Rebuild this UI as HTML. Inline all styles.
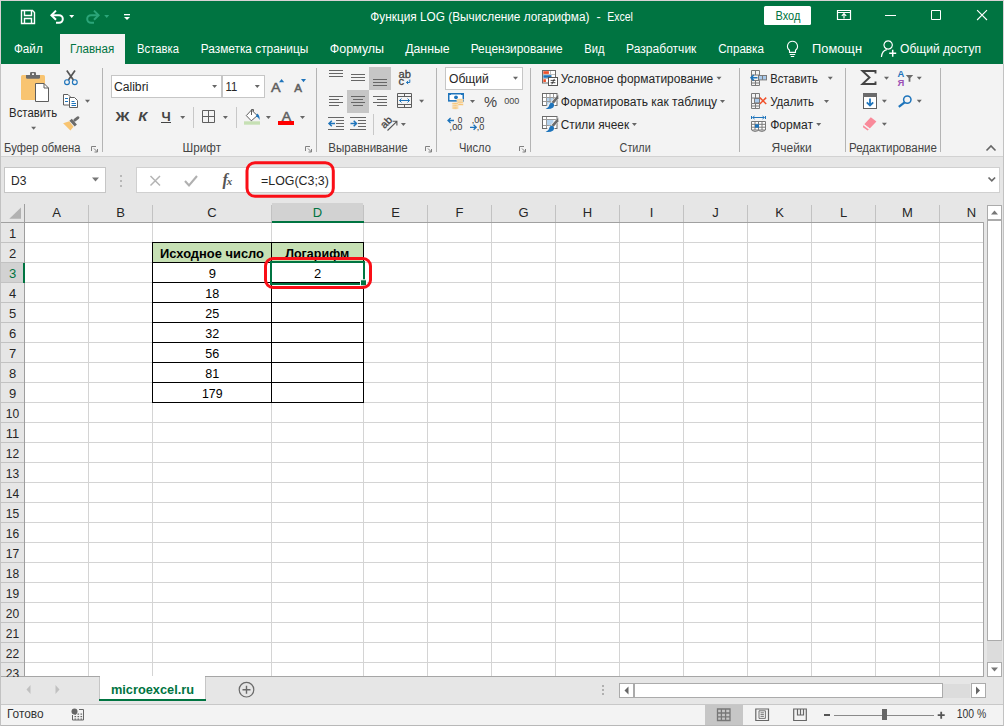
<!DOCTYPE html>
<html lang="ru"><head><meta charset="utf-8"><title>Функция LOG (Вычисление логарифма) - Excel</title>
<style>
html,body{margin:0;padding:0;background:#e6e6e6;}
body{width:1004px;height:726px;overflow:hidden;position:relative;font-family:"Liberation Sans",sans-serif;}
.r{position:absolute;}
#titlebar{left:0;top:0;width:1004px;height:64px;background:#007441;}
#ribbon{left:0;top:64px;width:1004px;height:92px;background:#f3f3f3;border-bottom:1px solid #d2d2d2;}
#fbar{left:0;top:157px;width:1004px;height:46px;background:#e6e6e6;}
#grid{left:0;top:203px;width:984px;height:474px;background:#fff;}
#tabsbar{left:0;top:677px;width:1004px;height:27px;background:#e6e6e6;}
#status{left:0;top:704px;width:1004px;height:22px;background:#f3f3f3;}
svg{position:absolute;left:0;top:0;}
svg text{font-family:"Liberation Sans",sans-serif;}
</style></head><body>
<div class="r" id="titlebar"></div>
<div class="r" id="ribbon"></div>
<div class="r" id="fbar"></div>
<div class="r" id="grid"></div>
<div class="r" id="tabsbar"></div>
<div class="r" id="status"></div>
<svg width="1004" height="726" viewBox="0 0 1004 726">
<text x="370.3" y="20.5" font-size="12.5" fill="#fff" font-weight="normal" font-style="normal" textLength="219.2" lengthAdjust="spacingAndGlyphs" >Функция LOG (Вычисление логарифма)</text>
<text x="596.4" y="20.5" font-size="12.5" fill="#fff" font-weight="normal" font-style="normal" textLength="4.2" lengthAdjust="spacingAndGlyphs" >-</text>
<text x="607.2" y="20.5" font-size="12.5" fill="#fff" font-weight="normal" font-style="normal" textLength="25.7" lengthAdjust="spacingAndGlyphs" >Excel</text>
<rect x="764" y="6" width="47" height="19" fill="#fff" rx="1.5"/>
<text x="775.5" y="20" font-size="13" fill="#007441" font-weight="normal" font-style="normal" textLength="24.9" lengthAdjust="spacingAndGlyphs" >Вход</text>
<path d="M21.5 10.5h11l2 2v11h-13z M24.5 10.5v5h7v-5 M24.5 23.5v-5h7v5" fill="none" stroke="#fff" stroke-width="1.4" />
<path d="M51.5 15.2h7.5a3.8 3.8 0 0 1 0 7.6h-3" fill="none" stroke="#fff" stroke-width="2" />
<path d="M56 10.6l-4.6 4.6l4.6 4.6" fill="none" stroke="#fff" stroke-width="2" />
<path d="M69.2 15.0h5l-2.5 3z" fill="#fff" stroke="none" stroke-width="1" />
<path d="M98.5 15.2h-7.5a3.8 3.8 0 0 0 0 7.6h3" fill="none" stroke="#2ba579" stroke-width="2" />
<path d="M94 10.6l4.6 4.6l-4.6 4.6" fill="none" stroke="#2ba579" stroke-width="2" />
<path d="M104.2 15.0h5l-2.5 3z" fill="#2ba579" stroke="none" stroke-width="1" />
<rect x="124" y="14" width="6" height="1.3" fill="#fff" />
<path d="M124.0 17.0h6l-3.0 3z" fill="#fff" stroke="none" stroke-width="1" />
<path d="M837.5 10.5h13v9h-13z M837.5 12.5h13" fill="none" stroke="#fff" stroke-width="1.2" />
<path d="M844 18.5v-4.5 M841.8 15.8l2.2-2.2l2.2 2.2" fill="none" stroke="#fff" stroke-width="1.2" />
<rect x="885" y="15" width="11" height="1" fill="#fff" />
<path d="M931.5 10.5h9v9h-9z" fill="none" stroke="#fff" stroke-width="1" />
<path d="M977.1 10.1l9.9 9.9 M987 10.1l-9.9 9.9" fill="none" stroke="#fff" stroke-width="1.1" />
<rect x="60" y="34" width="65" height="31" fill="#f3f3f3" />
<text x="14.0" y="53" font-size="12.5" fill="#fff" font-weight="normal" font-style="normal" textLength="28.7" lengthAdjust="spacingAndGlyphs" >Файл</text>
<text x="70.1" y="53" font-size="12.5" fill="#007441" font-weight="normal" font-style="normal" textLength="44.1" lengthAdjust="spacingAndGlyphs" >Главная</text>
<text x="137.1" y="53" font-size="12.5" fill="#fff" font-weight="normal" font-style="normal" textLength="41.8" lengthAdjust="spacingAndGlyphs" >Вставка</text>
<text x="200.8" y="53" font-size="12.5" fill="#fff" font-weight="normal" font-style="normal" textLength="107.4" lengthAdjust="spacingAndGlyphs" >Разметка страницы</text>
<text x="329.8" y="53" font-size="12.5" fill="#fff" font-weight="normal" font-style="normal" textLength="54.3" lengthAdjust="spacingAndGlyphs" >Формулы</text>
<text x="405.2" y="53" font-size="12.5" fill="#fff" font-weight="normal" font-style="normal" textLength="44.4" lengthAdjust="spacingAndGlyphs" >Данные</text>
<text x="470.7" y="53" font-size="12.5" fill="#fff" font-weight="normal" font-style="normal" textLength="92.0" lengthAdjust="spacingAndGlyphs" >Рецензирование</text>
<text x="584.3" y="53" font-size="12.5" fill="#fff" font-weight="normal" font-style="normal" textLength="20.2" lengthAdjust="spacingAndGlyphs" >Вид</text>
<text x="626.1" y="53" font-size="12.5" fill="#fff" font-weight="normal" font-style="normal" textLength="70.3" lengthAdjust="spacingAndGlyphs" >Разработчик</text>
<text x="718.2" y="53" font-size="12.5" fill="#fff" font-weight="normal" font-style="normal" textLength="45.7" lengthAdjust="spacingAndGlyphs" >Справка</text>
<text x="812.1" y="53" font-size="12.5" fill="#fff" font-weight="normal" font-style="normal" textLength="49.9" lengthAdjust="spacingAndGlyphs" >Помощн</text>
<text x="900.0" y="53" font-size="12.5" fill="#fff" font-weight="normal" font-style="normal" textLength="81.0" lengthAdjust="spacingAndGlyphs" >Общий доступ</text>
<path d="M792.5 41.2a5 5 0 0 1 3 9v2.2h-6v-2.2a5 5 0 0 1 3-9z M789.8 54.5h5.4 M790.8 56.5h3.4" fill="none" stroke="#fff" stroke-width="1.1" />
<path d="M888.2 40.8a4.2 4.2 0 1 1 -0.1 0z M881.4 57c0.4-4.6 2.6-6.8 5.4-7.4" fill="none" stroke="#fff" stroke-width="1.2" />
<path d="M892.7 49.8v7 M889.2 53.3h7" fill="none" stroke="#fff" stroke-width="1.5" />
<rect x="102" y="68" width="1" height="84" fill="#b4b4b4" />
<rect x="316" y="68" width="1" height="84" fill="#b4b4b4" />
<rect x="436" y="68" width="1" height="84" fill="#b4b4b4" />
<rect x="530" y="68" width="1" height="84" fill="#b4b4b4" />
<rect x="739" y="68" width="1" height="84" fill="#b4b4b4" />
<rect x="845" y="68" width="1" height="84" fill="#b4b4b4" />
<rect x="940" y="68" width="1" height="84" fill="#b4b4b4" />
<text x="4.1" y="152" font-size="12" fill="#444" font-weight="normal" font-style="normal" textLength="76.3" lengthAdjust="spacingAndGlyphs" >Буфер обмена</text>
<text x="182.6" y="152" font-size="12" fill="#444" font-weight="normal" font-style="normal" textLength="38.4" lengthAdjust="spacingAndGlyphs" >Шрифт</text>
<text x="328.3" y="152" font-size="12" fill="#444" font-weight="normal" font-style="normal" textLength="79.5" lengthAdjust="spacingAndGlyphs" >Выравнивание</text>
<text x="458.9" y="152" font-size="12" fill="#444" font-weight="normal" font-style="normal" textLength="32.0" lengthAdjust="spacingAndGlyphs" >Число</text>
<text x="619.6" y="152" font-size="12" fill="#444" font-weight="normal" font-style="normal" textLength="31.1" lengthAdjust="spacingAndGlyphs" >Стили</text>
<text x="771.6" y="152" font-size="12" fill="#444" font-weight="normal" font-style="normal" textLength="40.2" lengthAdjust="spacingAndGlyphs" >Ячейки</text>
<text x="849.0" y="152" font-size="12" fill="#444" font-weight="normal" font-style="normal" textLength="87.9" lengthAdjust="spacingAndGlyphs" >Редактирование</text>
<path d="M91.5 151v-4.5h4.5" fill="none" stroke="#808080" stroke-width="1" />
<path d="M94 148.5l3.5 3.5 M97.5 149v3h-3" fill="none" stroke="#808080" stroke-width="1" />
<path d="M305.5 151v-4.5h4.5" fill="none" stroke="#808080" stroke-width="1" />
<path d="M308 148.5l3.5 3.5 M311.5 149v3h-3" fill="none" stroke="#808080" stroke-width="1" />
<path d="M425.5 151v-4.5h4.5" fill="none" stroke="#808080" stroke-width="1" />
<path d="M428 148.5l3.5 3.5 M431.5 149v3h-3" fill="none" stroke="#808080" stroke-width="1" />
<path d="M519.5 151v-4.5h4.5" fill="none" stroke="#808080" stroke-width="1" />
<path d="M522 148.5l3.5 3.5 M525.5 149v3h-3" fill="none" stroke="#808080" stroke-width="1" />
<path d="M986.5 150.5l4.5-4.5l4.5 4.5" fill="none" stroke="#666" stroke-width="1.6" />
<text x="9.1" y="117.3" font-size="12" fill="#262626" font-weight="normal" font-style="normal" textLength="48.1" lengthAdjust="spacingAndGlyphs" >Вставить</text>
<path d="M31.1 126.80000000000001h5l-2.5 3z" fill="#666" stroke="none" stroke-width="1" />
<rect x="111.5" y="75.5" width="110" height="22" fill="#fff" stroke="#c6c6c6"/>
<rect x="222.5" y="75.5" width="42" height="22" fill="#fff" stroke="#c6c6c6"/>
<text x="113.9" y="90.5" font-size="12" fill="#262626" font-weight="normal" font-style="normal" textLength="34.5" lengthAdjust="spacingAndGlyphs" >Calibri</text>
<text x="225.6" y="90.5" font-size="12" fill="#262626" font-weight="normal" font-style="normal" textLength="11.7" lengthAdjust="spacingAndGlyphs" >11</text>
<path d="M212.1 85.0h5l-2.5 3z" fill="#666" stroke="none" stroke-width="1" />
<path d="M254.8 85.0h5l-2.5 3z" fill="#666" stroke="none" stroke-width="1" />
<text x="115.4" y="120.5" font-size="13" fill="#444" font-weight="bold" font-style="normal" textLength="14.0" lengthAdjust="spacingAndGlyphs" >Ж</text>
<text x="138.3" y="120.5" font-size="13" fill="#444" font-weight="bold" font-style="italic" textLength="9.1" lengthAdjust="spacingAndGlyphs" >К</text>
<text x="161.5" y="120.5" font-size="13" fill="#444" font-weight="bold" font-style="normal" textLength="9.2" lengthAdjust="spacingAndGlyphs" >Ч</text>
<rect x="161" y="122" width="10" height="1" fill="#444" />
<path d="M180.2 116.1h5l-2.5 3z" fill="#666" stroke="none" stroke-width="1" />
<path d="M222.9 116.1h5l-2.5 3z" fill="#666" stroke="none" stroke-width="1" />
<path d="M265.9 116.1h5l-2.5 3z" fill="#666" stroke="none" stroke-width="1" />
<path d="M300.0 116.1h5l-2.5 3z" fill="#666" stroke="none" stroke-width="1" />
<rect x="193" y="107" width="1" height="21" fill="#c8c8c8" />
<rect x="236" y="107" width="1" height="21" fill="#c8c8c8" />
<rect x="445.5" y="67.5" width="77" height="22" fill="#fff" stroke="#c6c6c6"/>
<text x="449.0" y="83" font-size="12" fill="#262626" font-weight="normal" font-style="normal" textLength="39.9" lengthAdjust="spacingAndGlyphs" >Общий</text>
<path d="M513.0 76.8h5l-2.5 3z" fill="#666" stroke="none" stroke-width="1" />
<text x="484.0" y="106.6" font-size="14.5" fill="#444" font-weight="normal" font-style="normal" textLength="13.1" lengthAdjust="spacingAndGlyphs" >%</text>
<text x="504.3" y="103.8" font-size="9.4" fill="#444" font-weight="normal" font-style="normal" textLength="15.1" lengthAdjust="spacingAndGlyphs" >000</text>
<path d="M470.0 99.9h5l-2.5 3z" fill="#666" stroke="none" stroke-width="1" />
<text x="560.8" y="83.2" font-size="12" fill="#262626" font-weight="normal" font-style="normal" textLength="152.5" lengthAdjust="spacingAndGlyphs" >Условное форматирование</text>
<text x="560.8" y="106" font-size="12" fill="#262626" font-weight="normal" font-style="normal" textLength="156.3" lengthAdjust="spacingAndGlyphs" >Форматировать как таблицу</text>
<text x="560.8" y="128.7" font-size="12" fill="#262626" font-weight="normal" font-style="normal" textLength="68.3" lengthAdjust="spacingAndGlyphs" >Стили ячеек</text>
<path d="M716.5 76.8h5l-2.5 3z" fill="#666" stroke="none" stroke-width="1" />
<path d="M720.0 99.9h5l-2.5 3z" fill="#666" stroke="none" stroke-width="1" />
<path d="M631.9 122.9h5l-2.5 3z" fill="#666" stroke="none" stroke-width="1" />
<text x="770.2" y="83.2" font-size="12" fill="#262626" font-weight="normal" font-style="normal" textLength="47.7" lengthAdjust="spacingAndGlyphs" >Вставить</text>
<text x="770.2" y="106" font-size="12" fill="#262626" font-weight="normal" font-style="normal" textLength="43.9" lengthAdjust="spacingAndGlyphs" >Удалить</text>
<text x="770.2" y="128.7" font-size="12" fill="#262626" font-weight="normal" font-style="normal" textLength="42.9" lengthAdjust="spacingAndGlyphs" >Формат</text>
<path d="M827.8 76.8h5l-2.5 3z" fill="#666" stroke="none" stroke-width="1" />
<path d="M824.0 99.9h5l-2.5 3z" fill="#666" stroke="none" stroke-width="1" />
<path d="M816.2 122.9h5l-2.5 3z" fill="#666" stroke="none" stroke-width="1" />
<path d="M884.0 76.7h5l-2.5 3z" fill="#666" stroke="none" stroke-width="1" />
<path d="M916.8 76.7h5l-2.5 3z" fill="#666" stroke="none" stroke-width="1" />
<path d="M881.9 99.8h5l-2.5 3z" fill="#666" stroke="none" stroke-width="1" />
<path d="M916.8 99.8h5l-2.5 3z" fill="#666" stroke="none" stroke-width="1" />
<path d="M881.9 122.8h5l-2.5 3z" fill="#666" stroke="none" stroke-width="1" />
<rect x="369" y="67" width="22" height="23" fill="#c6c6c6" />
<rect x="347" y="90" width="22" height="23" fill="#c6c6c6" />
<rect x="373" y="114" width="1" height="21" fill="#c8c8c8" />
<path d="M419.1 99.8h5l-2.5 3z" fill="#666" stroke="none" stroke-width="1" />
<path d="M400.9 122.9h5l-2.5 3z" fill="#666" stroke="none" stroke-width="1" />
<rect x="4.5" y="167.5" width="101" height="25" fill="#fff" stroke="#c6c6c6"/>
<text x="11.1" y="184.5" font-size="12" fill="#262626" font-weight="normal" font-style="normal" textLength="15.4" lengthAdjust="spacingAndGlyphs" >D3</text>
<path d="M92.0 177.5h7l-3.5 4z" fill="#777" stroke="none" stroke-width="1" />
<rect x="120" y="175" width="2" height="2" fill="#b8b8b8" />
<rect x="120" y="180" width="2" height="2" fill="#b8b8b8" />
<rect x="120" y="185" width="2" height="2" fill="#b8b8b8" />
<rect x="136.5" y="167.5" width="863" height="25" fill="#fff" stroke="#d0d0d0"/>
<path d="M150.5 176l9.5 9.5 M160 176l-9.5 9.5" fill="none" stroke="#b4b4b4" stroke-width="1.5" />
<path d="M185 181l4 4.5l8-9.5" fill="none" stroke="#b0b0b0" stroke-width="2.1" />
<text x="222.5" y="184.5" style="font-family:'Liberation Serif',serif" font-style="italic" fill="#555"><tspan font-size="16" font-weight="bold">f</tspan><tspan font-size="11" dx="-1" font-weight="bold">x</tspan></text>
<text x="261.1" y="185" font-size="13" fill="#262626" font-weight="normal" font-style="normal" textLength="67.8" lengthAdjust="spacingAndGlyphs" >=LOG(C3;3)</text>
<path d="M988.5 177.5l3.3 3.4l3.3-3.4" fill="none" stroke="#6a6a6a" stroke-width="1.7" />
<rect x="0" y="203" width="984" height="20" fill="#e6e6e6" />
<rect x="0" y="223" width="25" height="454" fill="#e6e6e6" />
<rect x="272" y="203" width="91" height="19" fill="#d2d2d2" />
<rect x="0" y="263" width="24" height="19" fill="#d2d2d2" />
<rect x="88" y="223" width="1" height="454" fill="#d4d4d4" />
<rect x="152" y="223" width="1" height="454" fill="#d4d4d4" />
<rect x="271" y="223" width="1" height="454" fill="#d4d4d4" />
<rect x="363" y="223" width="1" height="454" fill="#d4d4d4" />
<rect x="427" y="223" width="1" height="454" fill="#d4d4d4" />
<rect x="491" y="223" width="1" height="454" fill="#d4d4d4" />
<rect x="555" y="223" width="1" height="454" fill="#d4d4d4" />
<rect x="619" y="223" width="1" height="454" fill="#d4d4d4" />
<rect x="683" y="223" width="1" height="454" fill="#d4d4d4" />
<rect x="747" y="223" width="1" height="454" fill="#d4d4d4" />
<rect x="811" y="223" width="1" height="454" fill="#d4d4d4" />
<rect x="875" y="223" width="1" height="454" fill="#d4d4d4" />
<rect x="939" y="223" width="1" height="454" fill="#d4d4d4" />
<rect x="25" y="242" width="959" height="1" fill="#d4d4d4" />
<rect x="25" y="262" width="959" height="1" fill="#d4d4d4" />
<rect x="25" y="282" width="959" height="1" fill="#d4d4d4" />
<rect x="25" y="302" width="959" height="1" fill="#d4d4d4" />
<rect x="25" y="322" width="959" height="1" fill="#d4d4d4" />
<rect x="25" y="342" width="959" height="1" fill="#d4d4d4" />
<rect x="25" y="362" width="959" height="1" fill="#d4d4d4" />
<rect x="25" y="382" width="959" height="1" fill="#d4d4d4" />
<rect x="25" y="402" width="959" height="1" fill="#d4d4d4" />
<rect x="25" y="422" width="959" height="1" fill="#d4d4d4" />
<rect x="25" y="442" width="959" height="1" fill="#d4d4d4" />
<rect x="25" y="462" width="959" height="1" fill="#d4d4d4" />
<rect x="25" y="482" width="959" height="1" fill="#d4d4d4" />
<rect x="25" y="502" width="959" height="1" fill="#d4d4d4" />
<rect x="25" y="522" width="959" height="1" fill="#d4d4d4" />
<rect x="25" y="542" width="959" height="1" fill="#d4d4d4" />
<rect x="25" y="562" width="959" height="1" fill="#d4d4d4" />
<rect x="25" y="582" width="959" height="1" fill="#d4d4d4" />
<rect x="25" y="602" width="959" height="1" fill="#d4d4d4" />
<rect x="25" y="622" width="959" height="1" fill="#d4d4d4" />
<rect x="25" y="642" width="959" height="1" fill="#d4d4d4" />
<rect x="25" y="662" width="959" height="1" fill="#d4d4d4" />
<rect x="88" y="205" width="1" height="18" fill="#c2c2c2" />
<rect x="152" y="205" width="1" height="18" fill="#c2c2c2" />
<rect x="271" y="205" width="1" height="18" fill="#c2c2c2" />
<rect x="363" y="205" width="1" height="18" fill="#c2c2c2" />
<rect x="427" y="205" width="1" height="18" fill="#c2c2c2" />
<rect x="491" y="205" width="1" height="18" fill="#c2c2c2" />
<rect x="555" y="205" width="1" height="18" fill="#c2c2c2" />
<rect x="619" y="205" width="1" height="18" fill="#c2c2c2" />
<rect x="683" y="205" width="1" height="18" fill="#c2c2c2" />
<rect x="747" y="205" width="1" height="18" fill="#c2c2c2" />
<rect x="811" y="205" width="1" height="18" fill="#c2c2c2" />
<rect x="875" y="205" width="1" height="18" fill="#c2c2c2" />
<rect x="939" y="205" width="1" height="18" fill="#c2c2c2" />
<rect x="0" y="242" width="24" height="1" fill="#c2c2c2" />
<rect x="0" y="262" width="24" height="1" fill="#c2c2c2" />
<rect x="0" y="282" width="24" height="1" fill="#c2c2c2" />
<rect x="0" y="302" width="24" height="1" fill="#c2c2c2" />
<rect x="0" y="322" width="24" height="1" fill="#c2c2c2" />
<rect x="0" y="342" width="24" height="1" fill="#c2c2c2" />
<rect x="0" y="362" width="24" height="1" fill="#c2c2c2" />
<rect x="0" y="382" width="24" height="1" fill="#c2c2c2" />
<rect x="0" y="402" width="24" height="1" fill="#c2c2c2" />
<rect x="0" y="422" width="24" height="1" fill="#c2c2c2" />
<rect x="0" y="442" width="24" height="1" fill="#c2c2c2" />
<rect x="0" y="462" width="24" height="1" fill="#c2c2c2" />
<rect x="0" y="482" width="24" height="1" fill="#c2c2c2" />
<rect x="0" y="502" width="24" height="1" fill="#c2c2c2" />
<rect x="0" y="522" width="24" height="1" fill="#c2c2c2" />
<rect x="0" y="542" width="24" height="1" fill="#c2c2c2" />
<rect x="0" y="562" width="24" height="1" fill="#c2c2c2" />
<rect x="0" y="582" width="24" height="1" fill="#c2c2c2" />
<rect x="0" y="602" width="24" height="1" fill="#c2c2c2" />
<rect x="0" y="622" width="24" height="1" fill="#c2c2c2" />
<rect x="0" y="642" width="24" height="1" fill="#c2c2c2" />
<rect x="0" y="662" width="24" height="1" fill="#c2c2c2" />
<rect x="0" y="222" width="984" height="1" fill="#a0a0a0" />
<rect x="24" y="204" width="1" height="473" fill="#9e9e9e" />
<rect x="983" y="222" width="1" height="455" fill="#a6a6a6" />
<rect x="0" y="676" width="984" height="1" fill="#a6a6a6" />
<path d="M21 207.4v11.4h-11.7z" fill="#b2b2b2" stroke="none" stroke-width="1" />
<rect x="272" y="221" width="92" height="2" fill="#007441" />
<rect x="23" y="263" width="2" height="20" fill="#007441" />
<text x="56.5" y="217" font-size="13" fill="#262626" font-weight="normal" text-anchor="middle"  >A</text>
<text x="120.5" y="217" font-size="13" fill="#262626" font-weight="normal" text-anchor="middle"  >B</text>
<text x="212.0" y="217" font-size="13" fill="#262626" font-weight="normal" text-anchor="middle"  >C</text>
<text x="317.5" y="217" font-size="13" fill="#007441" font-weight="normal" text-anchor="middle"  >D</text>
<text x="395.5" y="217" font-size="13" fill="#262626" font-weight="normal" text-anchor="middle"  >E</text>
<text x="459.5" y="217" font-size="13" fill="#262626" font-weight="normal" text-anchor="middle"  >F</text>
<text x="523.5" y="217" font-size="13" fill="#262626" font-weight="normal" text-anchor="middle"  >G</text>
<text x="587.5" y="217" font-size="13" fill="#262626" font-weight="normal" text-anchor="middle"  >H</text>
<text x="651.5" y="217" font-size="13" fill="#262626" font-weight="normal" text-anchor="middle"  >I</text>
<text x="715.5" y="217" font-size="13" fill="#262626" font-weight="normal" text-anchor="middle"  >J</text>
<text x="779.5" y="217" font-size="13" fill="#262626" font-weight="normal" text-anchor="middle"  >K</text>
<text x="843.5" y="217" font-size="13" fill="#262626" font-weight="normal" text-anchor="middle"  >L</text>
<text x="907.5" y="217" font-size="13" fill="#262626" font-weight="normal" text-anchor="middle"  >M</text>
<text x="971.5" y="217" font-size="13" fill="#262626" font-weight="normal" text-anchor="middle"  >N</text>
<text x="12.5" y="238" font-size="13" fill="#262626" font-weight="normal" text-anchor="middle"  >1</text>
<text x="12.5" y="258" font-size="13" fill="#262626" font-weight="normal" text-anchor="middle"  >2</text>
<text x="12.5" y="278" font-size="13" fill="#007441" font-weight="normal" text-anchor="middle"  >3</text>
<text x="12.5" y="298" font-size="13" fill="#262626" font-weight="normal" text-anchor="middle"  >4</text>
<text x="12.5" y="318" font-size="13" fill="#262626" font-weight="normal" text-anchor="middle"  >5</text>
<text x="12.5" y="338" font-size="13" fill="#262626" font-weight="normal" text-anchor="middle"  >6</text>
<text x="12.5" y="358" font-size="13" fill="#262626" font-weight="normal" text-anchor="middle"  >7</text>
<text x="12.5" y="378" font-size="13" fill="#262626" font-weight="normal" text-anchor="middle"  >8</text>
<text x="12.5" y="398" font-size="13" fill="#262626" font-weight="normal" text-anchor="middle"  >9</text>
<text x="12.5" y="418" font-size="13" fill="#262626" font-weight="normal" text-anchor="middle" textLength="13.4" lengthAdjust="spacingAndGlyphs" >10</text>
<text x="12.5" y="438" font-size="13" fill="#262626" font-weight="normal" text-anchor="middle" textLength="13.4" lengthAdjust="spacingAndGlyphs" >11</text>
<text x="12.5" y="458" font-size="13" fill="#262626" font-weight="normal" text-anchor="middle" textLength="13.4" lengthAdjust="spacingAndGlyphs" >12</text>
<text x="12.5" y="478" font-size="13" fill="#262626" font-weight="normal" text-anchor="middle" textLength="13.4" lengthAdjust="spacingAndGlyphs" >13</text>
<text x="12.5" y="498" font-size="13" fill="#262626" font-weight="normal" text-anchor="middle" textLength="13.4" lengthAdjust="spacingAndGlyphs" >14</text>
<text x="12.5" y="518" font-size="13" fill="#262626" font-weight="normal" text-anchor="middle" textLength="13.4" lengthAdjust="spacingAndGlyphs" >15</text>
<text x="12.5" y="538" font-size="13" fill="#262626" font-weight="normal" text-anchor="middle" textLength="13.4" lengthAdjust="spacingAndGlyphs" >16</text>
<text x="12.5" y="558" font-size="13" fill="#262626" font-weight="normal" text-anchor="middle" textLength="13.4" lengthAdjust="spacingAndGlyphs" >17</text>
<text x="12.5" y="578" font-size="13" fill="#262626" font-weight="normal" text-anchor="middle" textLength="13.4" lengthAdjust="spacingAndGlyphs" >18</text>
<text x="12.5" y="598" font-size="13" fill="#262626" font-weight="normal" text-anchor="middle" textLength="13.4" lengthAdjust="spacingAndGlyphs" >19</text>
<text x="12.5" y="618" font-size="13" fill="#262626" font-weight="normal" text-anchor="middle" textLength="13.4" lengthAdjust="spacingAndGlyphs" >20</text>
<text x="12.5" y="638" font-size="13" fill="#262626" font-weight="normal" text-anchor="middle" textLength="13.4" lengthAdjust="spacingAndGlyphs" >21</text>
<text x="12.5" y="658" font-size="13" fill="#262626" font-weight="normal" text-anchor="middle" textLength="13.4" lengthAdjust="spacingAndGlyphs" >22</text>
<text x="12.5" y="678" font-size="13" fill="#262626" font-weight="normal" text-anchor="middle" textLength="13.4" lengthAdjust="spacingAndGlyphs" >23</text>
<rect x="153" y="243" width="210" height="19" fill="#c6e0b4" />
<text x="212" y="258" font-size="13" fill="#000" font-weight="bold" text-anchor="middle" textLength="104" lengthAdjust="spacingAndGlyphs" >Исходное число</text>
<text x="317.2" y="258" font-size="13" fill="#000" font-weight="bold" text-anchor="middle" textLength="64" lengthAdjust="spacingAndGlyphs" >Логарифм</text>
<text x="212.3" y="278" font-size="13" fill="#000" font-weight="normal" text-anchor="middle"  >9</text>
<text x="212.3" y="298" font-size="13" fill="#000" font-weight="normal" text-anchor="middle" textLength="14" lengthAdjust="spacingAndGlyphs" >18</text>
<text x="212.3" y="318" font-size="13" fill="#000" font-weight="normal" text-anchor="middle" textLength="14" lengthAdjust="spacingAndGlyphs" >25</text>
<text x="212.3" y="338" font-size="13" fill="#000" font-weight="normal" text-anchor="middle" textLength="14" lengthAdjust="spacingAndGlyphs" >32</text>
<text x="212.3" y="358" font-size="13" fill="#000" font-weight="normal" text-anchor="middle" textLength="14" lengthAdjust="spacingAndGlyphs" >56</text>
<text x="212.3" y="378" font-size="13" fill="#000" font-weight="normal" text-anchor="middle" textLength="14" lengthAdjust="spacingAndGlyphs" >81</text>
<text x="212.3" y="398" font-size="13" fill="#000" font-weight="normal" text-anchor="middle" textLength="20.6" lengthAdjust="spacingAndGlyphs" >179</text>
<text x="317.5" y="278" font-size="13" fill="#000" font-weight="normal" text-anchor="middle"  >2</text>
<rect x="152" y="242" width="212" height="1" fill="#000" />
<rect x="152" y="262" width="212" height="1" fill="#000" />
<rect x="152" y="282" width="212" height="1" fill="#000" />
<rect x="152" y="302" width="212" height="1" fill="#000" />
<rect x="152" y="322" width="212" height="1" fill="#000" />
<rect x="152" y="342" width="212" height="1" fill="#000" />
<rect x="152" y="362" width="212" height="1" fill="#000" />
<rect x="152" y="382" width="212" height="1" fill="#000" />
<rect x="152" y="402" width="212" height="1" fill="#000" />
<rect x="152" y="242" width="1" height="161" fill="#000" />
<rect x="271" y="242" width="1" height="161" fill="#000" />
<rect x="363" y="242" width="1" height="161" fill="#000" />
<rect x="271" y="262" width="93" height="22" fill="none" stroke="#007441" stroke-width="2"/>
<rect x="360.5" y="279.8" width="6" height="6" fill="#007441" stroke="#fff" stroke-width="1"/>
<rect x="265.5" y="258.5" width="105" height="29" fill="none" stroke="#fa0f17" stroke-width="3" rx="7.5"/>
<rect x="247" y="162.7" width="86.3" height="33.6" fill="none" stroke="#fa0f17" stroke-width="3" rx="8"/>
<rect x="984" y="203" width="20" height="474" fill="#e6e6e6" />
<rect x="987.5" y="205.5" width="14" height="14" fill="#fff" stroke="#ababab"/>
<path d="M991 214.5h7l-3.5-4z" fill="#777" stroke="none" stroke-width="1" />
<rect x="987.5" y="220.5" width="14" height="420" fill="#fff" stroke="#ababab"/>
<rect x="987" y="641" width="15" height="21" fill="#dcdcdc" />
<rect x="987.5" y="662.5" width="14" height="14" fill="#fff" stroke="#ababab"/>
<path d="M991 667.5h7l-3.5 4z" fill="#777" stroke="none" stroke-width="1" />
<rect x="0" y="677" width="1004" height="27" fill="#e6e6e6" />
<path d="M30.5 685l-4 4.5l4 4.5z" fill="#c0c0c0" stroke="none" stroke-width="1" />
<path d="M55.5 685l4 4.5l-4 4.5z" fill="#c0c0c0" stroke="none" stroke-width="1" />
<rect x="100" y="676" width="105" height="23" fill="#fff" />
<rect x="99" y="677" width="1" height="22" fill="#c6c6c6" />
<rect x="205" y="677" width="1" height="22" fill="#c6c6c6" />
<rect x="99" y="699" width="107" height="2" fill="#007441" />
<text x="110.9" y="693.5" font-size="13" fill="#007441" font-weight="bold" font-style="normal" textLength="83.2" lengthAdjust="spacingAndGlyphs" >microexcel.ru</text>
<circle cx="246.5" cy="689.7" r="7.3" fill="none" stroke="#6a6a6a" stroke-width="1.2"/>
<path d="M242.5 689.7h8 M246.5 685.7v8" fill="none" stroke="#6a6a6a" stroke-width="1.4" />
<rect x="602" y="685" width="2" height="2" fill="#b0b0b0" />
<rect x="602" y="689" width="2" height="2" fill="#b0b0b0" />
<rect x="602" y="693" width="2" height="2" fill="#b0b0b0" />
<rect x="619.5" y="683.5" width="14" height="14" fill="#fff" stroke="#ababab"/>
<path d="M628.5 686.5v8l-4-4z" fill="#666" stroke="none" stroke-width="1" />
<rect x="634.5" y="683.5" width="308" height="14" fill="#fff" stroke="#ababab"/>
<rect x="943" y="684" width="27" height="14" fill="#dcdcdc" />
<rect x="971.5" y="683.5" width="14" height="14" fill="#fff" stroke="#ababab"/>
<path d="M976 686.5v8l4-4z" fill="#666" stroke="none" stroke-width="1" />
<rect x="0" y="704" width="1004" height="1" fill="#c8c8c8" />
<text x="6.9" y="717.7" font-size="12" fill="#333" font-weight="normal" font-style="normal" textLength="36.7" lengthAdjust="spacingAndGlyphs" >Готово</text>
<circle cx="74.5" cy="711.5" r="3" fill="#666"/>
<path d="M79 709.5h4.5v10.5h-11v-5" fill="none" stroke="#666" stroke-width="1" />
<rect x="74.5" y="713.5" width="1.6" height="1.2" fill="#666" />
<rect x="77.5" y="713.5" width="1.6" height="1.2" fill="#666" />
<rect x="80.5" y="713.5" width="1.6" height="1.2" fill="#666" />
<rect x="74.5" y="716.0" width="1.6" height="1.2" fill="#666" />
<rect x="77.5" y="716.0" width="1.6" height="1.2" fill="#666" />
<rect x="80.5" y="716.0" width="1.6" height="1.2" fill="#666" />
<rect x="74.5" y="718.5" width="1.6" height="1.2" fill="#666" />
<rect x="77.5" y="718.5" width="1.6" height="1.2" fill="#666" />
<rect x="80.5" y="718.5" width="1.6" height="1.2" fill="#666" />
<rect x="705" y="705" width="38" height="20" fill="#c6c6c6" />
<path d="M717.5 709h12.5v11.5h-12.5z M717 713h13 M717 716.8h13 M721.4 709v11.5 M725.6 709v11.5" fill="none" stroke="#777" stroke-width="1.3" />
<path d="M755.8 709h12.7v11.5h-12.7z" fill="none" stroke="#666" stroke-width="1.2" />
<path d="M759 710.8h6.4v7.6h-6.4z M760.5 712.8h3.4 M760.5 714.6h3.4 M760.5 716.4h3.4" fill="none" stroke="#666" stroke-width="0.9" />
<path d="M793.7 709h12.6v11.5h-12.6z M797.5 709v6h6v-6 M800.5 709v6" fill="none" stroke="#666" stroke-width="1.2" />
<rect x="824" y="714" width="6" height="2" fill="#555" />
<rect x="834" y="715" width="100" height="1" fill="#8a8a8a" />
<rect x="882" y="709" width="5" height="11" fill="#666" />
<path d="M937.7 715.2h7 M941.2 711.7v7" fill="none" stroke="#555" stroke-width="1.8" />
<text x="956.7" y="718" font-size="12" fill="#333" font-weight="normal" font-style="normal" textLength="29.5" lengthAdjust="spacingAndGlyphs" >100 %</text>
<rect x="0" y="725" width="1004" height="1" fill="#b8b8b8" />
<rect x="0" y="0" width="1004" height="1" fill="#d8d2d5" />
<rect x="0" y="0" width="1" height="64" fill="#d8d2d5" />
<rect x="0" y="64" width="1" height="662" fill="#c2c2c2" />
<rect x="1003" y="0" width="1" height="64" fill="#d8d2d5" />
<rect x="1003" y="64" width="1" height="662" fill="#c2c2c2" />
<rect x="21" y="75" width="24" height="25" fill="#f8c471" rx="1.5"/>
<path d="M26 75v2.5q0 1.3 1.3 1.3h11.4q1.3 0 1.3-1.3v-2.5z" fill="#6b6b6b" stroke="none" stroke-width="1" />
<path d="M30 75.5v-2.2q0-1.3 1.3-1.3h3.4q1.3 0 1.3 1.3v2.2z" fill="#6b6b6b" stroke="none" stroke-width="1" />
<rect x="32" y="73.3" width="2" height="1.7" fill="#f3f3f3" />
<path d="M35.5 83.5h8.5l4.5 4.5v13.5h-13z" fill="#fff" stroke="#5e5e5e" stroke-width="1" />
<path d="M44 83.5v4.5h4.5" fill="none" stroke="#5e5e5e" stroke-width="1" />
<path d="M66.8 70.5l6.6 9.6 M75 70.5l-6.6 9.6" fill="none" stroke="#555" stroke-width="1.7" />
<circle cx="67" cy="82.2" r="2.4" fill="none" stroke="#1e74bb" stroke-width="1.15"/>
<circle cx="74.8" cy="82.2" r="2.4" fill="none" stroke="#1e74bb" stroke-width="1.15"/>
<path d="M63.5 94.5h4.5l2.5 2.5v8h-7z" fill="#fff" stroke="#5e5e5e" stroke-width="1" />
<path d="M69.5 97.5h5l3 3v7h-8z" fill="#fff" stroke="#5e5e5e" stroke-width="1" />
<path d="M65 98.5h3 M65 101.5h3 M71.5 101.5h3 M71.5 103.5h4.5 M71.5 105.5h4.5" fill="none" stroke="#1e74bb" stroke-width="1" />
<path d="M85.0 99.8h5l-2.5 3z" fill="#666" stroke="none" stroke-width="1" />
<path d="M63.1 123.3L69.3 121.3L73.5 126.8L70.4 130.5z" fill="#f8c471" stroke="none" stroke-width="1" />
<path d="M69.4 120.7L71.8 118.8L76.9 124.4L74.7 126.4z" fill="#6b6b6b" stroke="none" stroke-width="1" />
<path d="M74.8 120.2L78 117.7" fill="none" stroke="#6b6b6b" stroke-width="2.8" stroke-linecap="round"/>
<text x="271.1" y="91.8" font-size="13.6" fill="#5e5e5e" stroke="#5e5e5e" stroke-width="0.5" textLength="9.6" lengthAdjust="spacingAndGlyphs">A</text>
<path d="M279 82.2l2.6-3.2l2.6 3.2z" fill="#1e74bb" stroke="none" stroke-width="1" />
<text x="294.2" y="91.8" font-size="10.8" fill="#5e5e5e" stroke="#5e5e5e" stroke-width="0.5" textLength="7.7" lengthAdjust="spacingAndGlyphs">A</text>
<path d="M301 79l2.5 3.2l2.5-3.2z" fill="#1e74bb" stroke="none" stroke-width="1" />
<path d="M202.5 110.5h12v12h-12z M208.5 110.5v12 M202.5 116.5h12" fill="none" stroke="#5e5e5e" stroke-width="1" />
<rect x="244" y="121.3" width="16" height="3.4" fill="#c6e0b4" />
<path d="M251.5 110l5.8 5.6l-6 5.2l-5-5.2z" fill="#fff" stroke="#5e5e5e" stroke-width="1" />
<path d="M251.5 115v-5.5h2v2" fill="none" stroke="#5e5e5e" stroke-width="1" />
<path d="M257 113.6q3 1.6 2.6 6.4q-1.6-3.6-3.6-3.2z" fill="#1e74bb" stroke="none" stroke-width="1" />
<text x="281.7" y="120.8" font-size="13.6" fill="#5e5e5e" stroke="#5e5e5e" stroke-width="0.5" textLength="9.4" lengthAdjust="spacingAndGlyphs">A</text>
<rect x="278" y="121" width="16" height="4" fill="#ff0000" />
<rect x="329" y="70" width="14" height="1" fill="#666" />
<rect x="329" y="73" width="14" height="1" fill="#666" />
<rect x="329" y="76" width="14" height="1" fill="#666" />
<rect x="351" y="74" width="14" height="1" fill="#666" />
<rect x="351" y="77" width="14" height="1" fill="#666" />
<rect x="351" y="80" width="14" height="1" fill="#666" />
<rect x="373" y="79" width="14" height="1" fill="#666" />
<rect x="373" y="82" width="14" height="1" fill="#666" />
<rect x="373" y="85" width="14" height="1" fill="#666" />
<rect x="329" y="96" width="14" height="1" fill="#666" />
<rect x="351" y="96" width="14" height="1" fill="#666" />
<rect x="373" y="96" width="14" height="1" fill="#666" />
<rect x="329" y="99" width="10" height="1" fill="#666" />
<rect x="353" y="99" width="10" height="1" fill="#666" />
<rect x="377" y="99" width="10" height="1" fill="#666" />
<rect x="329" y="102" width="14" height="1" fill="#666" />
<rect x="351" y="102" width="14" height="1" fill="#666" />
<rect x="373" y="102" width="14" height="1" fill="#666" />
<rect x="329" y="105" width="10" height="1" fill="#666" />
<rect x="353" y="105" width="10" height="1" fill="#666" />
<rect x="377" y="105" width="10" height="1" fill="#666" />
<text x="398.6" y="77.8" font-size="10.5" fill="#444" stroke="#444" stroke-width="0.3" textLength="12.4" lengthAdjust="spacingAndGlyphs">ab</text>
<text x="398.6" y="84.8" font-size="10.5" fill="#444" stroke="#444" stroke-width="0.3" textLength="5.6" lengthAdjust="spacingAndGlyphs">c</text>
<path d="M409.8 79.5v3h-3.2 M408.2 81l-1.8 1.5l1.8 1.5" fill="none" stroke="#1e74bb" stroke-width="1" />
<path d="M397.5 93.5h14v14h-14z M397.5 96.5h14 M397.5 104.5h14 M404.5 93.5v3 M404.5 104.5v3" fill="none" stroke="#5e5e5e" stroke-width="1" />
<path d="M399.5 100.5h10 M401.5 98.5l-2 2l2 2 M407.5 98.5l2 2l-2 2" fill="none" stroke="#1e74bb" stroke-width="1" />
<rect x="328" y="117" width="16" height="1" fill="#666" />
<rect x="328" y="129" width="16" height="1" fill="#666" />
<rect x="336" y="120" width="8" height="1" fill="#666" />
<rect x="336" y="123" width="8" height="1" fill="#666" />
<rect x="336" y="126" width="8" height="1" fill="#666" />
<rect x="350" y="117" width="16" height="1" fill="#666" />
<rect x="350" y="129" width="16" height="1" fill="#666" />
<rect x="358" y="120" width="8" height="1" fill="#666" />
<rect x="358" y="123" width="8" height="1" fill="#666" />
<rect x="358" y="126" width="8" height="1" fill="#666" />
<path d="M329 123.5h6 M331.8 120.8l-2.8 2.7l2.8 2.7" fill="none" stroke="#1e74bb" stroke-width="1.5" />
<path d="M350.5 123.5h6 M353.7 120.8l2.8 2.7l-2.8 2.7" fill="none" stroke="#1e74bb" stroke-width="1.5" />
<text x="0" y="0" font-size="10.5" fill="#444" stroke="#444" stroke-width="0.3" transform="translate(384.5 129) rotate(-45)">ab</text>
<path d="M387.5 130.5l9.4-9.2 M392.6 121.2h4.3v4.3" fill="none" stroke="#555" stroke-width="1.1" />
<rect x="448" y="93" width="16" height="8.6" fill="#1e74bb" />
<rect x="449.5" y="94.5" width="13" height="5.6" fill="#fff" />
<circle cx="456" cy="97.3" r="1.9" fill="#1e74bb"/>
<rect x="448" y="93" width="3" height="2" fill="#1e74bb" />
<rect x="461" y="93" width="3" height="2" fill="#1e74bb" />
<ellipse cx="460" cy="100.0" rx="3.6" ry="1.2" fill="#f8c471" stroke="#f3f3f3" stroke-width="0.6"/>
<ellipse cx="460" cy="102.19999999999999" rx="3.6" ry="1.2" fill="#f8c471" stroke="#f3f3f3" stroke-width="0.6"/>
<ellipse cx="460" cy="104.39999999999999" rx="3.6" ry="1.2" fill="#f8c471" stroke="#f3f3f3" stroke-width="0.6"/>
<ellipse cx="455.2" cy="103.80000000000001" rx="3.4" ry="1.2" fill="#f8c471" stroke="#f3f3f3" stroke-width="0.6"/>
<ellipse cx="455.2" cy="106.0" rx="3.4" ry="1.2" fill="#f8c471" stroke="#f3f3f3" stroke-width="0.6"/>
<ellipse cx="455.2" cy="108.0" rx="3.4" ry="1.2" fill="#f8c471" stroke="#f3f3f3" stroke-width="0.6"/>
<path d="M448 120.5h6 M450.6 118l-2.6 2.5l2.6 2.5" fill="none" stroke="#1e74bb" stroke-width="1.3" />
<text x="457.8" y="122.7" font-size="8.2" fill="#333" textLength="4.6" lengthAdjust="spacingAndGlyphs">0</text>
<text x="449.6" y="129.6" font-size="8.2" fill="#333" textLength="12.8" lengthAdjust="spacingAndGlyphs">,00</text>
<text x="471.8" y="122.7" font-size="8.2" fill="#333" textLength="12.6" lengthAdjust="spacingAndGlyphs">,00</text>
<path d="M470 127.3h6 M473.6 124.8l2.6 2.5l-2.6 2.5" fill="none" stroke="#1e74bb" stroke-width="1.3" />
<text x="476.8" y="129.6" font-size="8.2" fill="#333" textLength="7.6" lengthAdjust="spacingAndGlyphs">,0</text>
<rect x="542.5" y="70.5" width="13" height="12.5" fill="#fff" stroke="#6b6b6b"/>
<path d="M550.5 71v6 M543 74.5h12 M543 78.5h6" fill="none" stroke="#bdbdbd" stroke-width="1" />
<rect x="543.3" y="71.2" width="5.6" height="2.7" fill="#f0502a" />
<rect x="543.3" y="75.2" width="8.2" height="2.6" fill="#1e74bb" />
<rect x="543.3" y="79.2" width="2.6" height="2.8" fill="#f0502a" />
<rect x="548.5" y="77.5" width="9" height="8" fill="#fff" stroke="#555"/>
<path d="M550.6 80.4h4.8 M550.6 82.7h4.8 M554.4 78.9l-2.6 5.4" fill="none" stroke="#333" stroke-width="0.9" />
<rect x="542.5" y="93.5" width="14.5" height="12" fill="#fff" stroke="#6b6b6b"/>
<rect x="546.5" y="97.5" width="7" height="8" fill="#b5d3ee" />
<path d="M546.5 94v11 M550 94v11 M553.5 94v11 M543 97.5h13.5 M543 101.5h13.5" fill="none" stroke="#9a9a9a" stroke-width="1" />
<path d="M559 93.6l0.2 4.2l-5.4 6.6l-3.2-2.6z" fill="#f3f3f3" stroke="none" stroke-width="1" />
<path d="M558.2 94.6l0.2 3.6l-4.8 5.6l-2-1.8z" fill="#6b6b6b" stroke="none" stroke-width="1" />
<path d="M549 102.4l6 3.4l-1 3.4l-9 0.4z" fill="#f3f3f3" stroke="none" stroke-width="1" />
<path d="M552.4 102.8q3 2 0.8 4.6q-3 2.2-7.6 1.4q3.6-1.6 3.6-3.8q0.8-2.6 3.2-2.2z" fill="#1e74bb" stroke="none" stroke-width="1" />
<rect x="542.5" y="116.5" width="14.5" height="12" fill="#fff" stroke="#6b6b6b"/>
<rect x="546.5" y="120" width="7" height="5.5" fill="#b5d3ee" />
<path d="M546.5 117v11 M543 119.5h13.5 M543 125.5h10" fill="none" stroke="#9a9a9a" stroke-width="1" />
<path d="M559 116.6l0.2 4.2l-5.4 6.6l-3.2-2.6z" fill="#f3f3f3" stroke="none" stroke-width="1" />
<path d="M558.2 117.6l0.2 3.6l-4.8 5.6l-2-1.8z" fill="#6b6b6b" stroke="none" stroke-width="1" />
<path d="M549 125.4l6 3.4l-1 3.4l-9 0.4z" fill="#f3f3f3" stroke="none" stroke-width="1" />
<path d="M552.4 125.8q3 2 0.8 4.6q-3 2.2-7.6 1.4q3.6-1.6 3.6-3.8q0.8-2.6 3.2-2.2z" fill="#1e74bb" stroke="none" stroke-width="1" />
<path d="M751.5 70.5h8v4.5h-8z M751.5 80.5h8v5h-8z M755.5 70.5v4.5 M755.5 80.5v5 M751.5 83h8" fill="none" stroke="#7a7a7a" stroke-width="1" />
<path d="M751.5 75v5.5 M759.5 75.5v-0.5" fill="none" stroke="#7a7a7a" stroke-width="1" />
<rect x="758.5" y="75.5" width="8" height="4.4" fill="#a9c9ea" stroke="#7a7a7a"/>
<rect x="762" y="75.5" width="1" height="4.4" fill="#7a7a7a" />
<path d="M751 77.7h6.5 M753.8 75l-2.8 2.7l2.8 2.7" fill="none" stroke="#1e74bb" stroke-width="1.5" />
<path d="M751.5 93.5h8v4.5h-8z M751.5 103.5h8v5h-8z M755.5 93.5v4.5 M755.5 103.5v5 M751.5 106h8" fill="none" stroke="#7a7a7a" stroke-width="1" />
<rect x="754.5" y="98.5" width="5" height="4.4" fill="#a9c9ea" stroke="#7a7a7a"/>
<path d="M751.5 98v5.5" fill="none" stroke="#7a7a7a" stroke-width="1" />
<path d="M759.8 97.6l6.4 6.4 M766.2 97.6l-6.4 6.4" fill="none" stroke="#f0502a" stroke-width="1.5" />
<path d="M751.5 116v3 M765.5 116v3 M752.5 117.5h12 M754.5 116l-1.8 1.5l1.8 1.5 M762.5 116l1.8 1.5l-1.8 1.5" fill="none" stroke="#1e74bb" stroke-width="1" />
<path d="M751.5 121.5h14v8.5h-14z M751.5 124.3h14 M751.5 127.2h14 M755 121.5v8.5 M758.5 121.5v8.5 M762 121.5v8.5" fill="#fff" stroke="#7a7a7a" stroke-width="1" />
<rect x="755" y="124.3" width="4" height="3.4" fill="#1e74bb" />
<path d="M752 130.5q3 2 6.5 0q3.5 2 6.5 0" fill="none" stroke="#7a7a7a" stroke-width="1" />
<path d="M875.5 73.5v-2.5h-13l7 6.5l-7 6.5h13v-2.5" fill="none" stroke="#444" stroke-width="1.9" />
<text x="897.6" y="76.9" font-size="9" font-weight="bold" fill="#1e74bb" textLength="6.8" lengthAdjust="spacingAndGlyphs">A</text>
<text x="897.6" y="85.9" font-size="9" font-weight="bold" fill="#9b4fb5" textLength="6.8" lengthAdjust="spacingAndGlyphs">Я</text>
<path d="M905.8 75h7.4l-2.8 3v3.8h-1.8v-3.8z" fill="#6b6b6b" stroke="none" stroke-width="1" />
<rect x="863.5" y="93.5" width="13" height="15" fill="#fff" stroke="#5e5e5e"/>
<rect x="863" y="93" width="14" height="4" fill="#6b6b6b" />
<path d="M870 98.5v7 M866.8 102.4l3.2 3.2l3.2-3.2" fill="none" stroke="#1e74bb" stroke-width="1.8" />
<circle cx="907.3" cy="99.6" r="3.7" fill="none" stroke="#1e74bb" stroke-width="1.5"/>
<path d="M904.6 102.4l-5.8 4.4" fill="none" stroke="#1e74bb" stroke-width="2.2" />
<path d="M870.8 117.2l5.6 4.2l-6.6 7l-5.6-4.2z" fill="#f98a9a" stroke="none" stroke-width="1" />
<path d="M864.2 124.2l5.6 4.2l-0.9 0.9l-5.6-4.2z" fill="#f3f3f3" stroke="none" stroke-width="1" />
<path d="M863.2 125.2l5.6 4.2l-1.2 1.2l-4.6-3.4z" fill="#f98a9a" stroke="none" stroke-width="1" />
</svg>
</body></html>
